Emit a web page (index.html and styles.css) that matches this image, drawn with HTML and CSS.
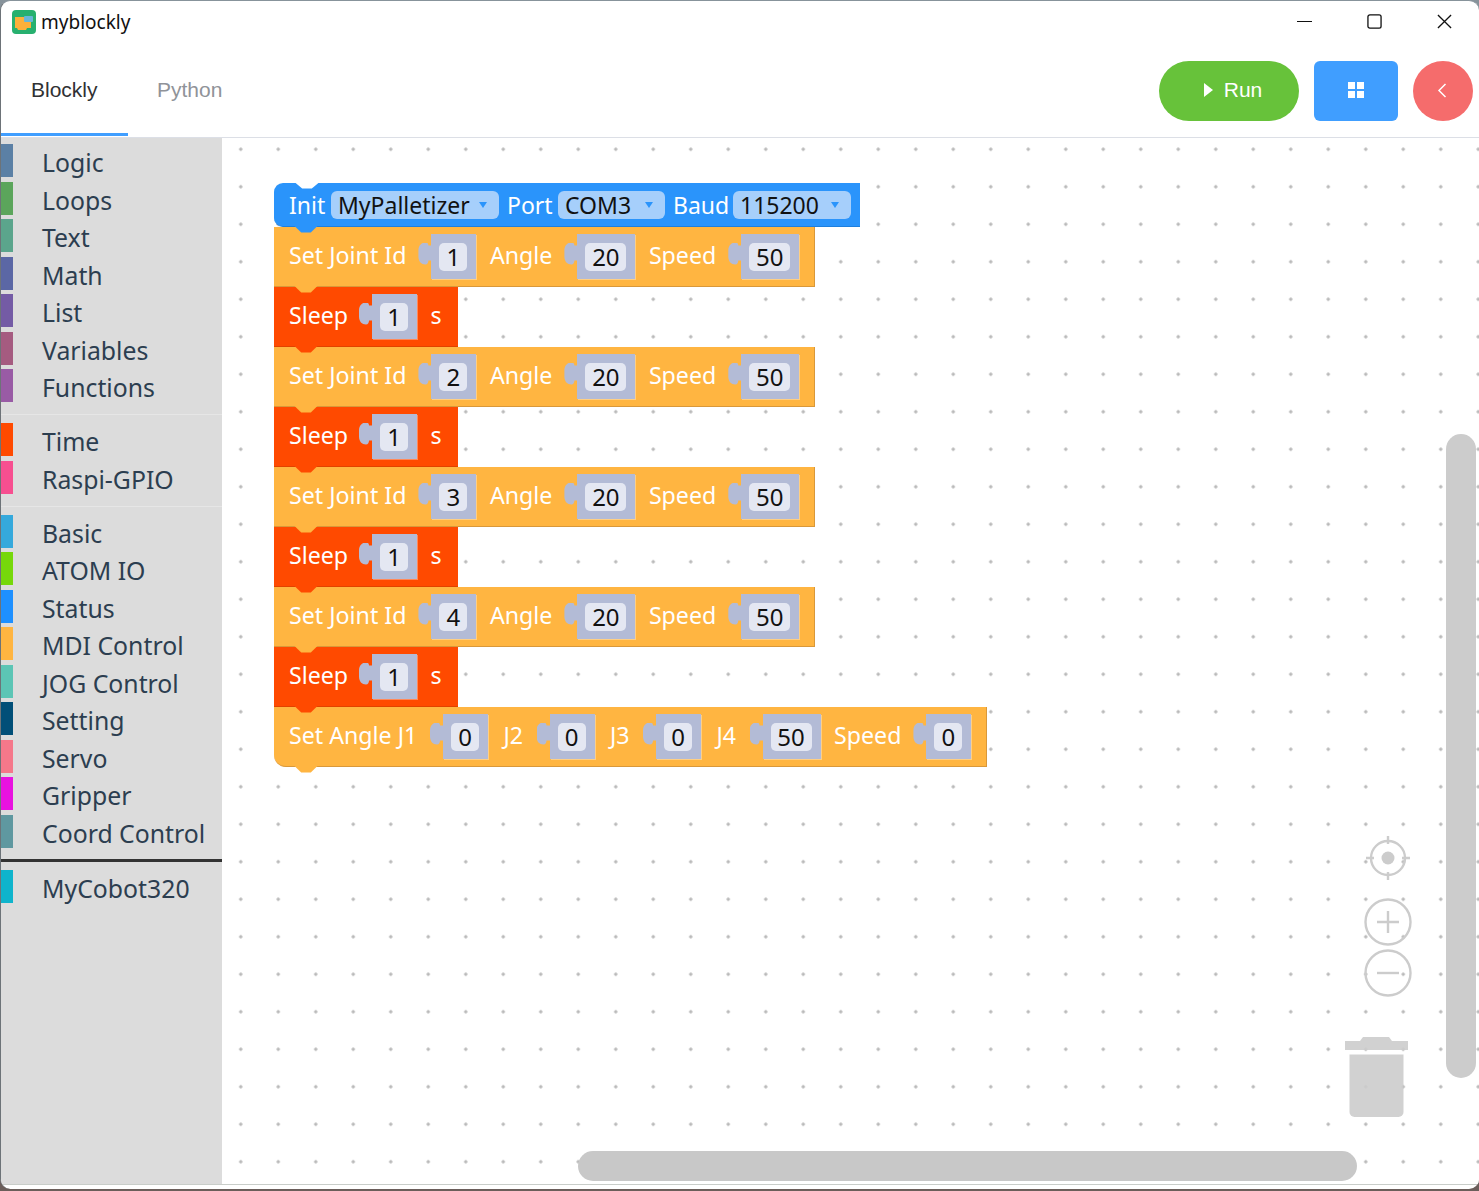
FILE: index.html
```html
<!DOCTYPE html>
<html lang="en">
<head>
<meta charset="utf-8">
<title>myblockly</title>
<link rel="stylesheet" href="styles.css">
</head>
<body>
<div class="window">
  <div class="titlebar">
    <svg class="app-icon" viewBox="0 0 24 24"><rect width="24" height="24" rx="4" fill="#27b06f"/><path d="M3 7h11v4h5v7h-4l-1 2H6l-1-2H3z" fill="#fdb03a"/><rect x="12" y="6" width="9" height="6" rx="1" fill="#68b7d8"/></svg>
    <span class="app-name">myblockly</span>
    <div class="win-controls">
      <svg class="win-btn" viewBox="0 0 16 16"><path d="M0 8h16" stroke="#111" stroke-width="1.2"/></svg>
      <svg class="win-btn" viewBox="0 0 16 16"><rect x="1" y="1" width="14" height="14" rx="2" fill="none" stroke="#111" stroke-width="1.4"/></svg>
      <svg class="win-btn" viewBox="0 0 16 16"><path d="M1 1l14 14M15 1L1 15" stroke="#111" stroke-width="1.4"/></svg>
    </div>
  </div>
  <div class="toolbar">
    <div class="tab tab-active">Blockly</div>
    <div class="tab">Python</div>
    <div class="actions">
      <button class="btn btn-run"><svg class="play" viewBox="0 0 9 14"><path d="M0 0l9 7-9 7z" fill="#fff"/></svg>Run</button>
      <button class="btn btn-grid"><svg class="grid" viewBox="0 0 16 16"><path d="M0 0h7v7H0zM9 0h7v7H9zM0 9h7v7H0zM9 9h7v7H9z" fill="#fff"/></svg></button>
      <button class="btn btn-back"><svg class="chev" viewBox="0 0 10 15"><path d="M8.500 1L2 7.500l6.500 6.500" fill="none" stroke="#fff" stroke-width="1.500"/></svg></button>
    </div>
  </div>
  <div class="main">
    <nav class="sidebar">
      <div class="cat"><i class="bar c-logic"></i>Logic</div>
      <div class="cat"><i class="bar c-loops"></i>Loops</div>
      <div class="cat"><i class="bar c-text"></i>Text</div>
      <div class="cat"><i class="bar c-math"></i>Math</div>
      <div class="cat"><i class="bar c-list"></i>List</div>
      <div class="cat"><i class="bar c-vars"></i>Variables</div>
      <div class="cat"><i class="bar c-func"></i>Functions</div>
      <hr class="sep">
      <div class="cat"><i class="bar c-time"></i>Time</div>
      <div class="cat"><i class="bar c-gpio"></i>Raspi-GPIO</div>
      <hr class="sep">
      <div class="cat"><i class="bar c-basic"></i>Basic</div>
      <div class="cat"><i class="bar c-atom"></i>ATOM IO</div>
      <div class="cat"><i class="bar c-status"></i>Status</div>
      <div class="cat"><i class="bar c-mdi"></i>MDI Control</div>
      <div class="cat"><i class="bar c-jog"></i>JOG Control</div>
      <div class="cat"><i class="bar c-setting"></i>Setting</div>
      <div class="cat"><i class="bar c-servo"></i>Servo</div>
      <div class="cat"><i class="bar c-gripper"></i>Gripper</div>
      <div class="cat"><i class="bar c-coord"></i>Coord Control</div>
      <hr class="sep-dark">
      <div class="cat"><i class="bar c-cobot"></i>MyCobot320</div>
    </nav>
    <section class="canvas">
      <div class="stack">
        <div class="block b-init">
          <span class="lbl w-init">Init</span>
          <span class="dd w-pal">MyPalletizer<i class="arrow"></i></span>
          <span class="lbl w-port">Port</span>
          <span class="dd w-com">COM3<i class="arrow"></i></span>
          <span class="lbl w-bd">Baud</span>
          <span class="dd w-baud">115200<i class="arrow"></i></span>
        </div>
        <div class="block b-move">
          <span class="lbl">Set Joint Id</span><span class="sock"><b class="fld">1</b></span>
          <span class="lbl">Angle</span><span class="sock"><b class="fld two">20</b></span>
          <span class="lbl">Speed</span><span class="sock"><b class="fld two">50</b></span>
        </div>
        <div class="block b-sleep">
          <span class="lbl">Sleep</span><span class="sock"><b class="fld">1</b></span><span class="lbl">s</span>
        </div>
        <div class="block b-move">
          <span class="lbl">Set Joint Id</span><span class="sock"><b class="fld">2</b></span>
          <span class="lbl">Angle</span><span class="sock"><b class="fld two">20</b></span>
          <span class="lbl">Speed</span><span class="sock"><b class="fld two">50</b></span>
        </div>
        <div class="block b-sleep">
          <span class="lbl">Sleep</span><span class="sock"><b class="fld">1</b></span><span class="lbl">s</span>
        </div>
        <div class="block b-move">
          <span class="lbl">Set Joint Id</span><span class="sock"><b class="fld">3</b></span>
          <span class="lbl">Angle</span><span class="sock"><b class="fld two">20</b></span>
          <span class="lbl">Speed</span><span class="sock"><b class="fld two">50</b></span>
        </div>
        <div class="block b-sleep">
          <span class="lbl">Sleep</span><span class="sock"><b class="fld">1</b></span><span class="lbl">s</span>
        </div>
        <div class="block b-move">
          <span class="lbl">Set Joint Id</span><span class="sock"><b class="fld">4</b></span>
          <span class="lbl">Angle</span><span class="sock"><b class="fld two">20</b></span>
          <span class="lbl">Speed</span><span class="sock"><b class="fld two">50</b></span>
        </div>
        <div class="block b-sleep">
          <span class="lbl">Sleep</span><span class="sock"><b class="fld">1</b></span><span class="lbl">s</span>
        </div>
        <div class="block b-move b-last">
          <span class="lbl w-setangle">Set Angle J1</span><span class="sock"><b class="fld">0</b></span>
          <span class="lbl w-j">J2</span><span class="sock"><b class="fld">0</b></span>
          <span class="lbl w-j">J3</span><span class="sock"><b class="fld">0</b></span>
          <span class="lbl w-j">J4</span><span class="sock"><b class="fld two">50</b></span>
          <span class="lbl">Speed</span><span class="sock"><b class="fld">0</b></span>
        </div>
      </div>
      <svg class="ctl ctl-locate" viewBox="0 0 50 50"><g fill="none" stroke="#ccc" stroke-width="2.400"><circle cx="25" cy="25" r="17"/><path d="M25 3v8M25 39v8M3 25h8M39 25h8"/></g><circle cx="25" cy="25" r="6.500" fill="#ccc"/></svg>
      <svg class="ctl ctl-plus" viewBox="0 0 50 50"><g fill="none" stroke="#ccc" stroke-width="2.400"><circle cx="25" cy="25" r="22.500"/><path d="M25 14v22M14 25h22"/></g></svg>
      <svg class="ctl ctl-minus" viewBox="0 0 50 50"><g fill="none" stroke="#ccc" stroke-width="2.400"><circle cx="25" cy="25" r="22.500"/><path d="M14 25h22"/></g></svg>
      <svg class="ctl ctl-trash" viewBox="0 0 63 80"><path d="M0 4h15l3-4h26l3 4h16v9H0z" fill="#ccc" opacity=".9"/><path d="M4.500 17.500h54V75a5 5 0 0 1-5 5h-44a5 5 0 0 1-5-5z" fill="#ccc" opacity=".9"/></svg>
      <div class="scroll-v"></div>
      <div class="scroll-h"></div>
    </section>
  </div>
</div>
</body>
</html>
```
FILE: styles.css
```css
* { box-sizing: border-box; }
html, body { margin: 0; height: 100%; }
html { background: linear-gradient(#87939b 50%, #6b5e5a 50%); }
body { height: 1191px; overflow: hidden; }
.window {
  height: 1189px;
  padding-bottom: 4px;
  background: #fff;
  border-top: 1.500px solid #87939b;
  border-left: 1px solid #6d7378;
  border-radius: 10px;
  display: flex;
  flex-direction: column;
  overflow: hidden;
  font-family: "Noto Sans", "Liberation Sans", sans-serif;
}
.titlebar { height: 44px; flex: none; display: flex; align-items: center; padding: 0 0 3px 11px; }
.app-icon { width: 24px; height: 24px; }
.app-name { margin-left: 5px; font-size: 19px; color: #111; }
.win-controls { margin-left: auto; display: flex; gap: 55px; padding-right: 27px; }
.win-btn { width: 15px; height: 15px; display: block; }
.toolbar {
  height: 93px;
  flex: none;
  display: flex;
  border-bottom: 1.500px solid #dcdfe6;
  font-family: "Liberation Sans", Arial, sans-serif;
  font-size: 21px;
}
.tab { width: 127px; height: 91px; padding-left: 30px; line-height: 89px; color: #909399; }
.tab + .tab { padding-left: 29px; }
.tab-active { color: #303133; border-bottom: 3px solid #409eff; }
.actions { margin-left: auto; display: flex; gap: 15px; padding: 16px 6px 0 0; }
.btn { height: 60px; border: 0; color: #fff; font: inherit; padding: 0 0 2px; display: flex; align-items: center; justify-content: center; }
.btn-run { width: 140px; background: #67c23a; border-radius: 30px; padding-left: 8px; }
.btn-grid { width: 84px; background: #409eff; border-radius: 6px; }
.btn-back { width: 60px; background: #f56c6c; border-radius: 50%; padding-right: 2px; }
.play { width: 9px; height: 14px; margin-right: 11px; }
.grid { width: 16px; height: 16px; }
.chev { width: 10px; height: 15px; }
.main { flex: 1; display: flex; min-height: 0; border-bottom: 1px solid #c9cdc9; }
.sidebar { width: 221px; flex: none; background: #dcdcdc; padding-top: 6px; color: #2c3e50; font-size: 24.800px; }
.cat { height: 37.500px; line-height: 37.500px; display: flex; white-space: nowrap; }
.bar { width: 12px; height: 33px; margin-right: 29px; flex: none; }
.sep { border: 0; height: 1px; background: #e6e6e6; margin: 7.500px 0 8px; }
.sep-dark { border: 0; height: 3px; background: #333; margin: 7px 0 8px; }
.c-logic { background: #5b80a5; }
.c-loops { background: #5ba55b; }
.c-text { background: #5ba58c; }
.c-math { background: #5b67a5; }
.c-list { background: #745ba5; }
.c-vars { background: #a55b80; }
.c-func { background: #995ba5; }
.c-time { background: #ff4a00; }
.c-gpio { background: #f74f90; }
.c-basic { background: #35a9dc; }
.c-atom { background: #76d80a; }
.c-status { background: #1e90ff; }
.c-mdi { background: #ffb541; }
.c-jog { background: #5cc5b5; }
.c-setting { background: #014f78; }
.c-servo { background: #f5788a; }
.c-gripper { background: #e811e0; }
.c-coord { background: #5f98a0; }
.c-cobot { background: #0fb4cc; }
.canvas {
  flex: 1;
  position: relative;
  overflow: hidden;
  background-color: #fff;
  background-image: radial-gradient(circle, #b9b9b9 1.300px, transparent 2px);
  background-size: 37.500px 37.500px;
  background-position: 0 -7.500px;
}
.stack { position: absolute; left: 52px; top: 44.500px; display: flex; flex-direction: column; align-items: flex-start; }
.block {
  position: relative;
  height: 60px;
  display: flex;
  align-items: center;
  padding: 0 14.500px 0 15px;
  color: #fff;
  font-size: 23.200px;
  white-space: nowrap;
}
.block::after {
  content: "";
  position: absolute;
  left: 20px;
  bottom: -7px;
  width: 24px;
  height: 7px;
  background: inherit;
  clip-path: polygon(0 0, 100% 0, 70% 100%, 30% 100%);
  z-index: 1;
}
.b-init { height: 44px; background: #2a94fb; border-radius: 9px 0 0 9px; padding: 1px 9px 0 15px; border-bottom: 1px solid #1e7fdd; font-size: 23px; }
.b-init::before {
  content: "";
  position: absolute;
  left: 21px;
  top: 0;
  width: 24px;
  height: 6px;
  background: #fff;
  clip-path: polygon(0 0, 100% 0, 70% 100%, 30% 100%);
}
.b-move { background: #ffb541; border-bottom: 1.500px solid #d9983a; border-right: 1.500px solid #d9983a; }
.b-sleep { background: #ff4a00; border-bottom: 1.500px solid #e04200; padding-right: 16px; }
.b-last { border-radius: 0 0 0 12px; }
.lbl { flex: none; }
.b-move .lbl, .b-sleep .lbl { padding-bottom: 3px; }
.b-sleep .lbl:first-child { width: 58px; }
.w-init { width: 35px; }
.w-port { width: 44px; }
.w-bd { width: 53px; }
.w-setangle { width: 129px; }
.b-move .w-j { width: 23px; padding-left: 2px; }
.dd {
  height: 28px;
  margin: 0 8px 0 7px;
  padding: 0 8px 0 7px;
  display: flex;
  align-items: center;
  justify-content: space-between;
  background: #a6cffb;
  border-radius: 6px;
  color: #111;
}
.w-pal { width: 168px; }
.w-com { width: 107px; }
.w-baud { width: 118px; margin-right: 0; }
.arrow { width: 0; height: 0; border: 4px solid transparent; border-top: 6px solid #2a94fb; border-bottom: 0; margin-right: 4px; }
.sock {
  position: relative;
  margin: 0 13.500px 0 25px;
  height: 45px;
  padding: 9px 9px 0 8px;
  background: #b3bbd6;
  flex: none;
  box-shadow: 1px 1px 0 rgba(255, 255, 255, .35);
  font-size: 24px;
}
.sock:last-child { margin-right: 0; }
.sock::before {
  content: "";
  position: absolute;
  left: -13px;
  top: 9px;
  width: 15px;
  height: 22px;
  background: #b3bbd6;
  clip-path: path("M15 3H10C10 1 9 0 7 0C3 0 0 3 0 8V14C0 19 3 22 7 22C9 22 10 20 10 18H15Z");
}
.fld {
  display: block;
  width: 28px;
  height: 28px;
  line-height: 28px;
  background: #e4e7f2;
  border-radius: 5px;
  color: #111;
  font-weight: 400;
  text-align: center;
}
.fld.two { width: 41px; }
.ctl { position: absolute; }
.ctl-locate { left: 1141px; top: 695px; width: 50px; height: 50px; }
.ctl-plus { left: 1141px; top: 759px; width: 50px; height: 50px; }
.ctl-minus { left: 1141px; top: 810px; width: 50px; height: 50px; }
.ctl-trash { left: 1123px; top: 899px; width: 63px; height: 80px; }
.scroll-v { position: absolute; left: 1224px; top: 295.500px; width: 30px; height: 644px; border-radius: 15px; background: #ccc; }
.scroll-h { position: absolute; left: 356px; top: 1013px; width: 779px; height: 30px; border-radius: 15px; background: #c8c8c8; }
```
